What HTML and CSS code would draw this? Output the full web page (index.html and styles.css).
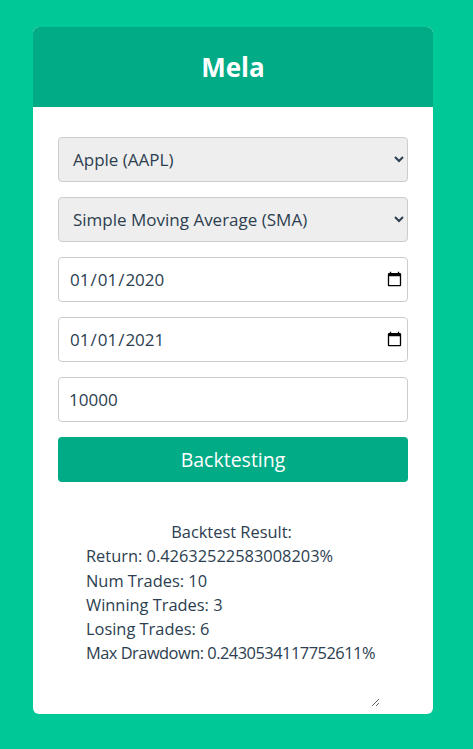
FILE: index.html
```html
<!DOCTYPE html>
<html lang="en">
<head>
<meta charset="utf-8">
<title>Mela</title>
<link rel="stylesheet" href="styles.css">
</head>
<body>
<div class="page">
  <div class="card">
    <header class="card-header">
      <h1 class="title">Mela</h1>
    </header>
    <div class="card-body">
      <form class="form">
        <select class="field field-select">
          <option>Apple (AAPL)</option>
        </select>
        <select class="field field-select">
          <option>Simple Moving Average (SMA)</option>
        </select>
        <input class="field field-date" type="date" value="2020-01-01">
        <input class="field field-date" type="date" value="2021-01-01">
        <input class="field" type="number" value="10000">
        <button type="button" class="btn">Backtesting</button>
      </form>
      <div class="result">
        <div class="result-title">Backtest Result:</div>
        <div>Return: 0.42632522583008203%</div>
        <div>Num Trades: 10</div>
        <div>Winning Trades: 3</div>
        <div>Losing Trades: 6</div>
        <div class="result-tight">Max Drawdown: 0.2430534117752611%</div>
      </div>
    </div>
  </div>
</div>
</body>
</html>
```

FILE: styles.css
```css
* { box-sizing: border-box; }
html, body { margin: 0; padding: 0; }
body {
  background: #00c897;
  font-family: "Open Sans", "DejaVu Sans", sans-serif;
  color: #2c3e50;
  width: 473px;
  height: 749px;
  overflow: hidden;
}
.page {
  padding-top: 27px;
  padding-left: 33px;
  display: flex;
}
.card {
  width: 400px;
  height: 687px;
  background: #fff;
  border-radius: 6px;
  overflow: hidden;
  display: flex;
  flex-direction: column;
}
.card-header {
  background: #00ab86;
  height: 80px;
  display: flex;
  align-items: center;
  justify-content: center;
}
.title {
  margin: 0;
  color: #fff;
  font-size: 26px;
  font-weight: 700;
}
.card-body {
  padding: 30px 25px 0;
}
.form {
  display: flex;
  flex-direction: column;
  gap: 15px;
}
.field {
  height: 45px;
  width: 100%;
  border: 1px solid #ccc;
  border-radius: 4px;
  padding: 0 10px;
  font-family: inherit;
  font-size: 17px;
  color: #2c3e50;
  background: #fff;
  margin: 0;
}
.field-select {
  background: #eee;
  padding: 0 10px;
}
.field-date {
  padding-right: 2px;
}
.btn {
  height: 45px;
  border: none;
  border-radius: 4px;
  background: #00ab86;
  color: #fff;
  font-family: inherit;
  font-size: 19.5px;
  font-weight: 500;
}
.result {
  margin: 30px 0 0 25px;
  width: 297px;
  height: 195px;
  padding: 8px 3px;
  font-size: 16.4px;
  line-height: 24.3px;
  color: #2c3e50;
  white-space: nowrap;
  resize: both;
  overflow: hidden;
}
.result-title {
  text-align: center;
}
.result-tight {
  letter-spacing: -0.5px;
}
```
